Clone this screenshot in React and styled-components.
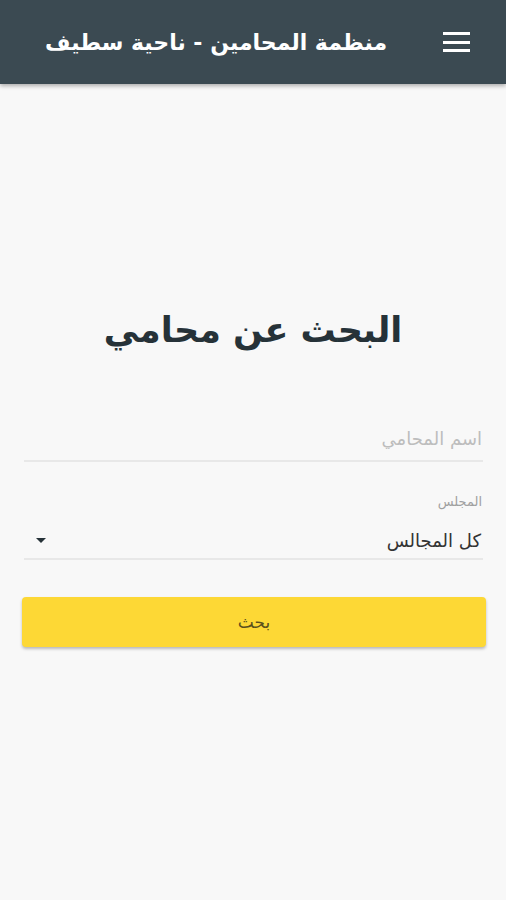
import React from "react";
import styled, { createGlobalStyle } from "styled-components";

const Global = createGlobalStyle`
  html, body { margin: 0; padding: 0; background: #f8f8f8; }
  body { font-family: "DejaVu Sans", "Noto Sans", sans-serif; }
  * { box-sizing: border-box; }
`;

const Page = styled.div`
  direction: rtl;
  min-height: 900px;
  background: #f8f8f8;
  display: flex;
  flex-direction: column;
`;

const Header = styled.header`
  height: 84px;
  background: #3b4a52;
  display: flex;
  align-items: center;
  padding: 0 36px 0 24px;
  gap: 56px;
  box-shadow: 0 2px 4px rgba(0, 0, 0, 0.3);
`;

const MenuButton = styled.button`
  background: none;
  border: none;
  padding: 0;
  width: 27px;
  height: 20px;
  display: flex;
  flex-direction: column;
  justify-content: space-between;
  cursor: pointer;
  span {
    display: block;
    height: 3px;
    background: #fff;
  }
`;

const Title = styled.h1`
  margin: 0;
  color: #fff;
  font-size: 22px;
  font-weight: bold;
  font-family: "DejaVu Sans", sans-serif;
  white-space: nowrap;
`;

const Content = styled.main`
  display: flex;
  flex-direction: column;
  padding: 226px 20px 0 20px;
`;

const Heading = styled.h2`
  margin: 0 0 78px;
  text-align: center;
  font-size: 35px;
  font-weight: bold;
  color: #263238;
`;

const Field = styled.div`
  display: flex;
  flex-direction: column;
  margin: 0 3px 0 4px;
  border-bottom: 2px solid #e8e8e8;
  padding-bottom: ${(p) => p.$pb || 8}px;
  margin-bottom: ${(p) => p.$mb || 0}px;
`;

const Input = styled.input`
  border: none;
  background: transparent;
  font-family: inherit;
  font-size: 18px;
  color: #333;
  padding: 0 1px;
  outline: none;
  direction: rtl;
  &::placeholder { color: #bdbdbd; }
`;

const Label = styled.label`
  font-size: 13px;
  color: #a0a0a0;
  padding: 0 1px;
  margin-bottom: 21px;
`;

const SelectRow = styled.div`
  display: flex;
  align-items: center;
  justify-content: space-between;
  padding: 0 2px 0 12px;
  font-size: 18px;
  color: #333;
`;

const Arrow = styled.span`
  width: 0;
  height: 0;
  border-left: 5px solid transparent;
  border-right: 5px solid transparent;
  border-top: 5px solid #263238;
`;

const SearchButton = styled.button`
  height: 50px;
  margin: 37px 0 0 2px;
  background: #fdd835;
  border: none;
  border-radius: 4px;
  box-shadow: 0 2px 3px rgba(0, 0, 0, 0.25);
  font-family: inherit;
  font-size: 17px;
  color: #5a4f1c;
  cursor: pointer;
`;

export default function App() {
  return (
    <>
      <Global />
      <Page>
        <Header>
          <MenuButton aria-label="menu">
            <span />
            <span />
            <span />
          </MenuButton>
          <Title>منظمة المحامين - ناحية سطيف</Title>
        </Header>
        <Content>
          <Heading>البحث عن محامي</Heading>
          <Field $pb={11} $mb={32}>
            <Input placeholder="اسم المحامي" />
          </Field>
          <Field $pb={7}>
            <Label>المجلس</Label>
            <SelectRow>
              <span>كل المجالس</span>
              <Arrow />
            </SelectRow>
          </Field>
          <SearchButton>بحث</SearchButton>
        </Content>
      </Page>
    </>
  );
}
